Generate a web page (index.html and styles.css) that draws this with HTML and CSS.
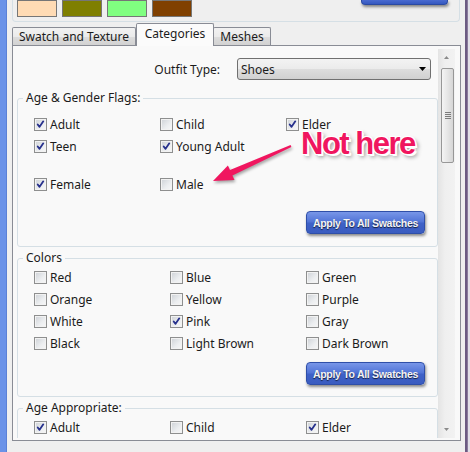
FILE: index.html
```html
<!DOCTYPE html>
<html lang="en">
<head>
<meta charset="utf-8">
<title>Categories</title>
<link rel="stylesheet" href="styles.css">
</head>
<body>
<div class="screen">
  <div class="desk-strip"></div>
  <div class="window">
    <div class="window-body">
      <div class="swatch-group">
        <span class="swatch peach"></span>
        <span class="swatch olive"></span>
        <span class="swatch lime"></span>
        <span class="swatch brown"></span>
        <span class="top-button"></span>
      </div>
      <div class="tabs">
        <div class="tab tab-swatch">Swatch and Texture</div>
        <div class="tab tab-categories active">Categories</div>
        <div class="tab tab-meshes">Meshes</div>
      </div>
      <div class="tab-panel">
        <div class="scroll-view">
          <div class="outfit-row">
            <span class="field-label">Outfit Type:</span>
            <div class="combo">
              <span>Shoes</span>
              <svg class="combo-arrow" width="7" height="4" viewBox="0 0 7 4"><path d="M0 0H7L3.5 4Z" fill="#000"/></svg>
            </div>
          </div>

          <fieldset class="group">
            <legend>Age &amp; Gender Flags:</legend>
            <div class="check-grid narrow first">
              <label class="check"><span class="box on"><svg viewBox="0 0 13 13"><path d="M3.2 6.4L5.4 9.3L9.8 2.8"/></svg></span>Adult</label>
              <label class="check"><span class="box"></span>Child</label>
              <label class="check"><span class="box on"><svg viewBox="0 0 13 13"><path d="M3.2 6.4L5.4 9.3L9.8 2.8"/></svg></span>Elder</label>
              <label class="check"><span class="box on"><svg viewBox="0 0 13 13"><path d="M3.2 6.4L5.4 9.3L9.8 2.8"/></svg></span>Teen</label>
              <label class="check"><span class="box on"><svg viewBox="0 0 13 13"><path d="M3.2 6.4L5.4 9.3L9.8 2.8"/></svg></span>Young Adult</label>
            </div>
            <div class="check-grid narrow gender">
              <label class="check"><span class="box on"><svg viewBox="0 0 13 13"><path d="M3.2 6.4L5.4 9.3L9.8 2.8"/></svg></span>Female</label>
              <label class="check"><span class="box"></span>Male</label>
            </div>
            <div class="apply-row flags-apply"><button class="apply">Apply To All Swatches</button></div>
          </fieldset>

          <fieldset class="group">
            <legend>Colors</legend>
            <div class="check-grid wide">
              <label class="check"><span class="box"></span>Red</label>
              <label class="check"><span class="box"></span>Blue</label>
              <label class="check"><span class="box"></span>Green</label>
              <label class="check"><span class="box"></span>Orange</label>
              <label class="check"><span class="box"></span>Yellow</label>
              <label class="check"><span class="box"></span>Purple</label>
              <label class="check"><span class="box"></span>White</label>
              <label class="check"><span class="box on"><svg viewBox="0 0 13 13"><path d="M3.2 6.4L5.4 9.3L9.8 2.8"/></svg></span>Pink</label>
              <label class="check"><span class="box"></span>Gray</label>
              <label class="check"><span class="box"></span>Black</label>
              <label class="check"><span class="box"></span>Light Brown</label>
              <label class="check"><span class="box"></span>Dark Brown</label>
            </div>
            <div class="apply-row colors-apply"><button class="apply">Apply To All Swatches</button></div>
          </fieldset>

          <fieldset class="group">
            <legend>Age Appropriate:</legend>
            <div class="check-grid wide">
              <label class="check"><span class="box on"><svg viewBox="0 0 13 13"><path d="M3.2 6.4L5.4 9.3L9.8 2.8"/></svg></span>Adult</label>
              <label class="check"><span class="box"></span>Child</label>
              <label class="check"><span class="box on"><svg viewBox="0 0 13 13"><path d="M3.2 6.4L5.4 9.3L9.8 2.8"/></svg></span>Elder</label>
            </div>
          </fieldset>
        </div>
        <div class="scrollbar">
          <div class="sb-button"><svg width="5" height="3" viewBox="0 0 5 3"><path d="M0 3H5L2.5 0Z" fill="#8a8a8a"/></svg></div>
          <div class="sb-thumb"><span></span><span></span><span></span><span></span></div>
          <div class="sb-track"></div>
          <div class="sb-button"><svg width="5" height="3" viewBox="0 0 5 3"><path d="M0 0H5L2.5 3Z" fill="#8a8a8a"/></svg></div>
        </div>
      </div>
    </div>
    <div class="window-edge"></div>
    <div class="window-outside"></div>
  </div>

  <div class="annotation">Not here</div>
  <svg class="annotation-arrow" width="95" height="55" viewBox="0 0 95 55">
    <polygon points="86.4,11.9 85.6,10.1 25.0,35.1 22.9,30.5 8,46 29.5,45.1 27.4,40.5" fill="#f0165f"/>
  </svg>
</div>
</body>
</html>
```

FILE: styles.css
```css
* { box-sizing: border-box; }

html, body {
  margin: 0;
  padding: 0;
}

body {
  width: 470px;
  height: 452px;
  overflow: hidden;
  background: #f0f0f0;
  font-family: "Noto Sans", "Open Sans", sans-serif;
  font-size: 12px;
  color: #1b1b1b;
}

.screen {
  position: relative;
  display: flex;
  width: 470px;
  height: 452px;
}

.desk-strip {
  width: 7px;
  background: #6a92e8;
  border-right: 1px solid #5a80d6;
}

.window {
  flex: 1;
  display: flex;
  background: #efefef;
}

.window-body {
  width: 458px;
  padding: 0 4px 0 5px;
  display: flex;
  flex-direction: column;
}

.window-edge {
  width: 3px;
  background: #6c5b82;
  border-right: 1px solid #8a7b9d;
}

.window-outside {
  flex: 1;
  background: #e2dfe7;
}

/* top swatch group */
.swatch-group {
  height: 22px;
  width: 448px;
  display: flex;
  align-items: flex-start;
  gap: 5px;
  padding-left: 4px;
  border: 1px solid #d5dfe5;
  border-top: none;
  border-radius: 0 0 4px 4px;
}

.swatch {
  width: 40px;
  height: 17px;
  border: 1px solid #767676;
}
.peach { background: #ffdbb4; }
.olive { background: #7f7f00; }
.lime  { background: #80ff80; }
.brown { background: #804000; }

.top-button {
  margin-left: auto;
  margin-right: 11px;
  width: 87px;
  height: 5px;
  background: linear-gradient(#4a6bd0, #3558c0);
  border: 1px solid #2b4aa2;
  border-top: none;
  border-radius: 0 0 4px 4px;
  box-shadow: 1px 2px 3px rgba(0, 0, 0, 0.45);
}

/* tabs */
.tabs {
  height: 23px;
  display: flex;
  align-items: flex-end;
}

.tab {
  height: 18px;
  display: flex;
  align-items: center;
  justify-content: center;
  border: 1px solid #898c95;
  border-bottom: none;
  background: linear-gradient(#f2f2f2, #ebebeb 50%, #dddddd 51%, #d2d2d2);
  border-radius: 2px 2px 0 0;
  white-space: nowrap;
  line-height: 16px;
}

.tab-swatch { width: 124px; }

.tab-categories {
  width: 78px;
  margin-left: 0;
}

.tab-meshes {
  width: 58px;
  margin-left: -1px;
}

.tab.active {
  height: 23px;
  margin-bottom: -1px;
  padding-bottom: 3px;
  background: #fbfbfb;
  position: relative;
  z-index: 1;
}

/* tab panel */
.tab-panel {
  width: 449px;
  height: 396px;
  display: flex;
  padding: 3px 5px 2px 0;
  border: 1px solid #898c95;
  background: #f9f9f9;
}

.scroll-view {
  width: 425px;
  height: 389px;
  overflow: hidden;
}

.outfit-row {
  margin-top: 9px;
  height: 22px;
  display: flex;
  justify-content: flex-end;
  align-items: center;
  gap: 17px;
  padding-right: 7px;
}

.combo {
  width: 194px;
  height: 22px;
  display: flex;
  align-items: center;
  justify-content: space-between;
  padding: 0 4px 0 3px;
  border: 1px solid #707070;
  border-radius: 3px;
  background: linear-gradient(#f3f3f3, #ebebeb 50%, #dddddd 51%, #d0d0d0);
}

.combo-arrow { display: block; }

/* group boxes */
.group {
  margin: 3px 0 0 4px;
  width: 421px;
  min-width: 0;
  padding: 0 0 11px 0;
  border: 1px solid #d5dfe5;
  border-radius: 3px;
}

.group:first-of-type { margin-top: 10px; }

.group legend {
  margin-left: 5px;
  padding: 0 3px;
  line-height: 16px;
  height: 16px;
}

.check-grid {
  display: grid;
  grid-auto-rows: 22px;
  padding-left: 16px;
}

.check-grid.narrow { grid-template-columns: repeat(3, 126px); }
.check-grid.wide { grid-template-columns: repeat(3, 136px); }

.check-grid.first { padding-top: 7px; }
.check-grid.gender { margin-top: 16px; }

.check {
  display: flex;
  align-items: center;
  gap: 3px;
  white-space: nowrap;
  line-height: 15px;
}

.box {
  width: 13px;
  height: 13px;
  flex: none;
  border: 1px solid #8e8f8f;
  background: linear-gradient(135deg, #cdd1d6, #eceef0 60%, #f7f7f7);
  box-shadow: inset 0 0 0 1px #f2f2f2;
  display: flex;
}

.box svg {
  width: 11px;
  height: 11px;
}

.box svg path {
  fill: none;
  stroke: #26308c;
  stroke-width: 2.1;
  stroke-linecap: round;
  stroke-linejoin: round;
}

.apply-row {
  display: flex;
  justify-content: flex-end;
  padding-right: 12px;
}

.flags-apply { margin-top: 16px; padding-bottom: 1px; }
.colors-apply { margin-top: 8px; }

.apply {
  width: 119px;
  height: 23px;
  padding: 0;
  border: 1px solid #2f4fa8;
  border-radius: 4px;
  background: linear-gradient(#7896e8, #5073d6 48%, #3f62c8 52%, #3a5cc0);
  box-shadow: 1px 2px 3px rgba(0, 0, 0, 0.45);
  color: #f4f4f4;
  font-family: "Liberation Sans", Arial, sans-serif;
  font-weight: bold;
  font-size: 10.5px;
  letter-spacing: -0.3px;
  text-shadow: 0 1px 1px rgba(0, 0, 0, 0.7);
}

/* scrollbar */
.scrollbar {
  width: 17px;
  height: 389px;
  display: flex;
  flex-direction: column;
  background: linear-gradient(to right, #e4e4e4, #efefef 40%, #f2f2f2);
}

.sb-button {
  height: 17px;
  display: flex;
  align-items: center;
  justify-content: center;
}

.sb-button svg { display: block; }

.sb-thumb {
  margin: 2px 0 0 3px;
  width: 13px;
  height: 95px;
  border: 1px solid #979797;
  border-radius: 2px;
  background: linear-gradient(to right, #f4f4f4, #e6e6e6 50%, #d6d6d6);
  display: flex;
  flex-direction: column;
  align-items: center;
  justify-content: center;
  gap: 1px;
}

.sb-thumb span {
  width: 6px;
  height: 1px;
  background: #7c7c7c;
}

.sb-track { flex: 1; }

/* annotation overlay */
.annotation {
  position: absolute;
  left: 301px;
  top: 134px;
  font-family: "Liberation Sans", Arial, sans-serif;
  font-weight: bold;
  font-size: 31px;
  line-height: 20px;
  letter-spacing: -1.5px;
  color: #f0165f;
  white-space: nowrap;
  text-shadow:
    -1px -1px 0 #fff, 1px -1px 0 #fff, -1px 1px 0 #fff, 1px 1px 0 #fff,
    2px 2px 0 #fff, 3px 3px 4px rgba(0, 0, 0, 0.45);
}

.annotation-arrow {
  position: absolute;
  left: 205px;
  top: 135px;
  filter: drop-shadow(1px 2px 1.5px rgba(0, 0, 0, 0.35));
}
```
